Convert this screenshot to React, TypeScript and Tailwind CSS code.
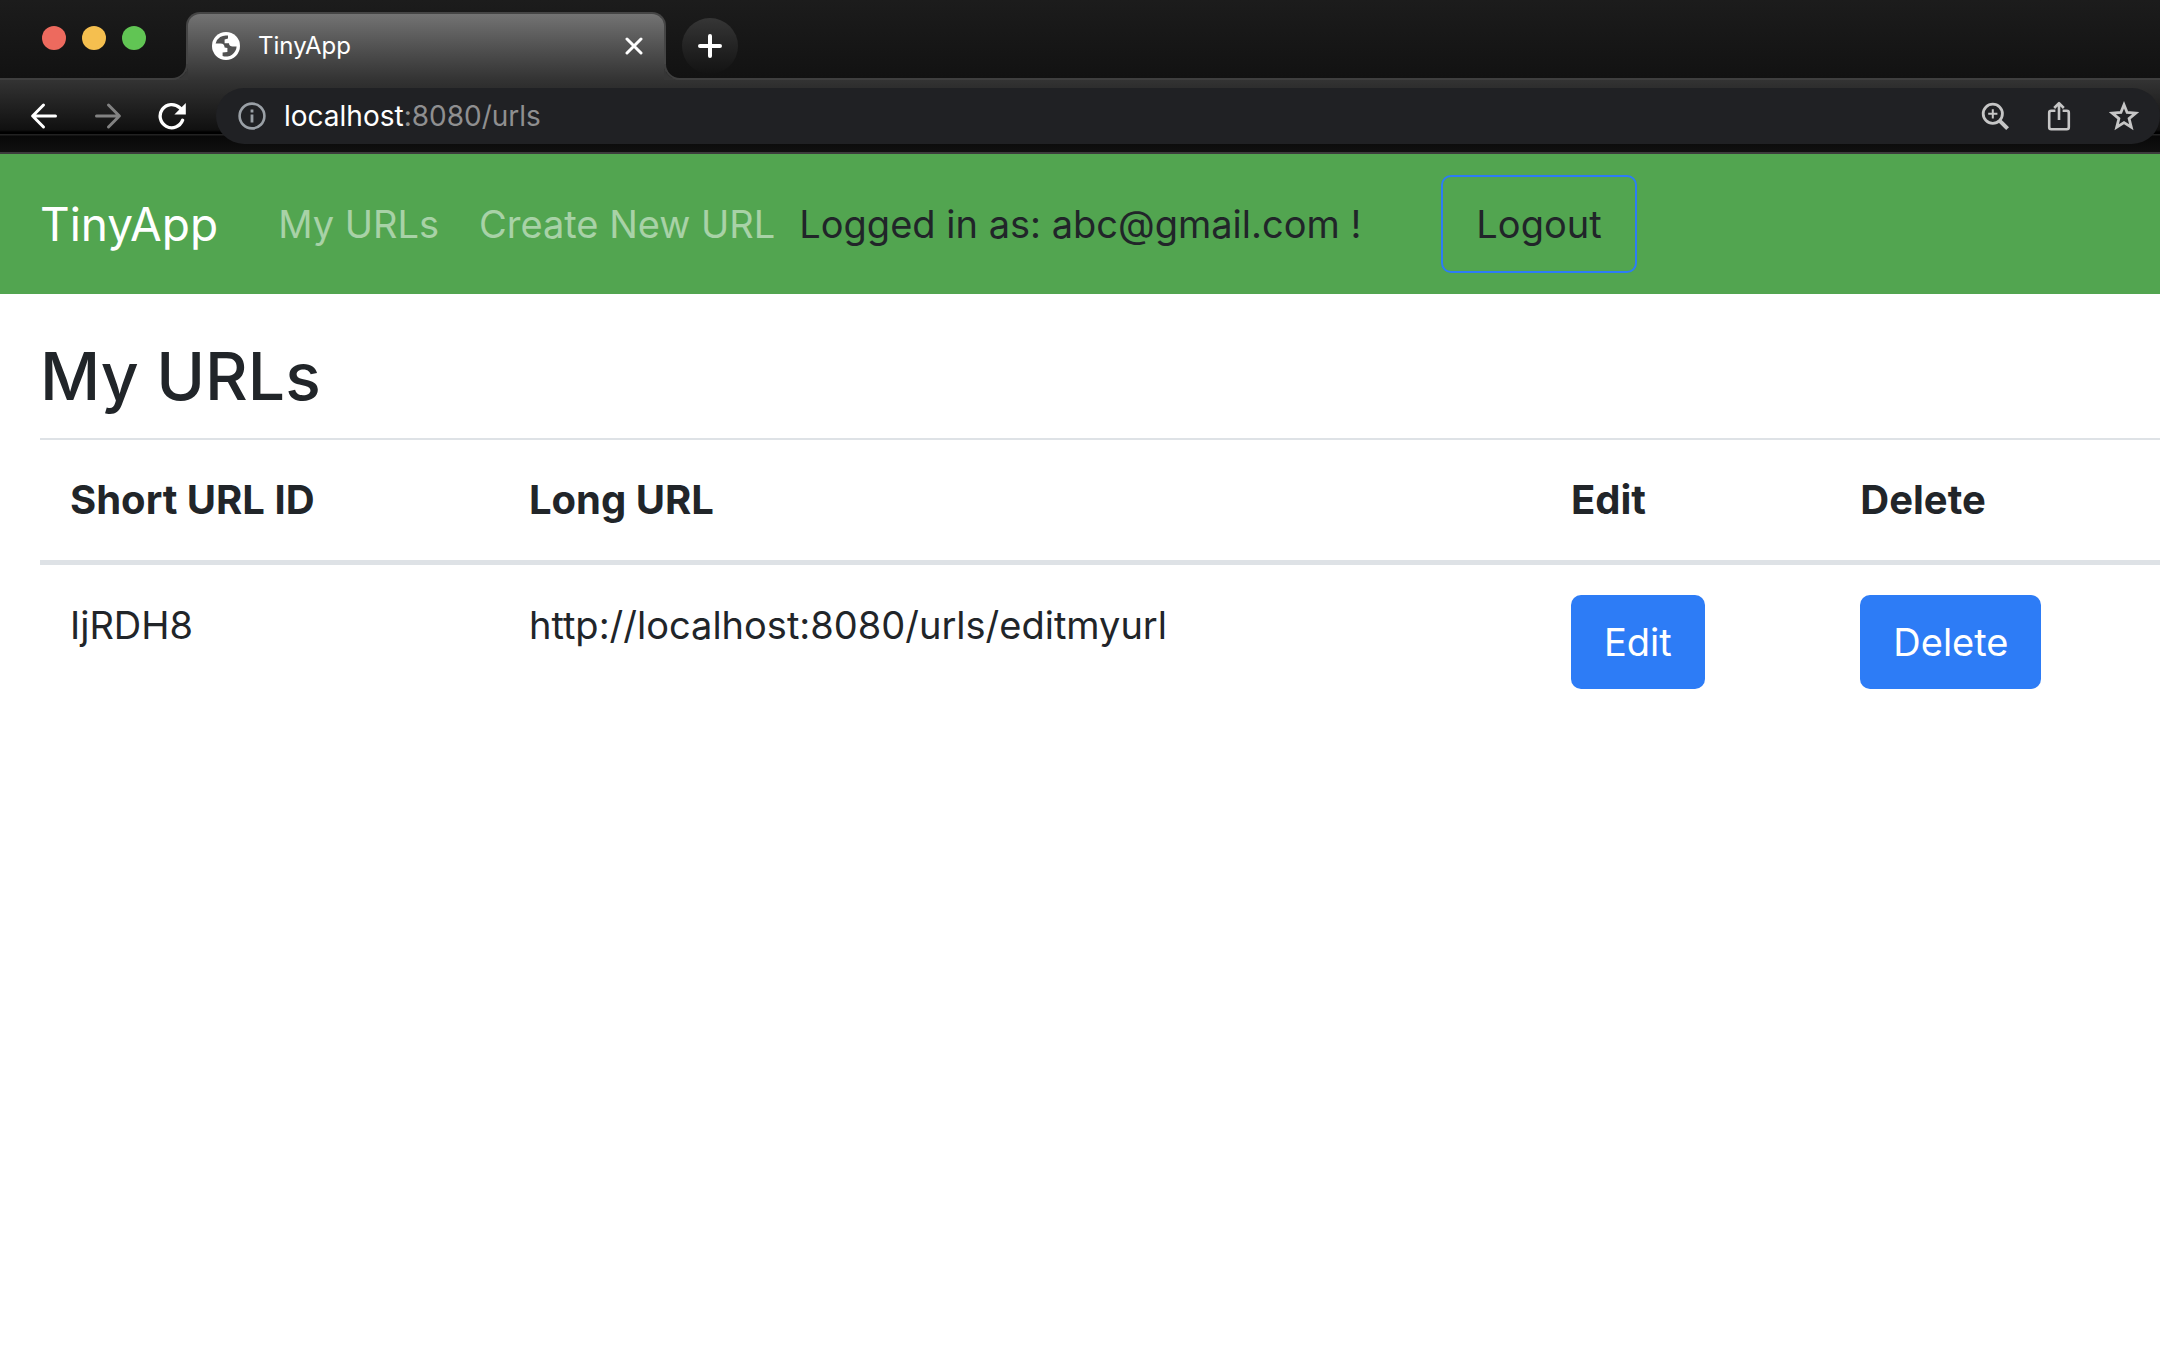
import React from "react";

const navLink = "px-5 text-[38px] leading-[60px] text-white/50";
const solidButton =
  "block rounded-[10px] bg-[#2d7cf6] px-[33px] py-[17px] text-[38px] leading-[60px] text-white";

function GlobeIcon() {
  return (
    <svg viewBox="0 0 28 28" className="size-7" aria-hidden="true">
      <circle cx="14" cy="14" r="14" fill="white" />
      <path
        d="M16 3.6 A10.6 10.6 0 0 0 3.6 11.6 L8.6 11.6 C11.4 11.6 12.4 13 12.6 15.4 L15.4 16 L15.4 20 L10.6 20.4 L10.6 24 A10.6 10.6 0 0 0 24.6 14.4 L20.6 14.4 C18.6 14.4 17 13.4 17 11.2 L12.6 11.2 L12.6 7.4 L16 6.4 Z"
        fill="#525252"
      />
    </svg>
  );
}

function BackIcon({ className }: { className: string }) {
  return (
    <svg viewBox="0 0 28 28" className={className} fill="none" stroke="currentColor" strokeWidth="3" strokeLinecap="round" strokeLinejoin="round" aria-hidden="true">
      <path d="M25.5 14H2.8M13.5 3 2.6 14l10.9 11" />
    </svg>
  );
}

function ReloadIcon() {
  return (
    <svg viewBox="0 0 28 28" className="size-7" aria-hidden="true">
      <path d="M24.600 18.200A11.600 11.600 0 1 1 21.800 5.800L24 8" fill="none" stroke="white" strokeWidth="3.300" strokeLinecap="round" />
      <path d="M27.800 1v11.400H16.400Z" fill="white" />
    </svg>
  );
}

function InfoIcon() {
  return (
    <svg viewBox="0 0 28 28" className="size-7" aria-hidden="true">
      <circle cx="14" cy="14" r="12.4" fill="none" stroke="#9aa0a6" strokeWidth="2.6" />
      <path d="M12.6 7.6h2.8v2.8h-2.8zM12.6 12.6h2.8v8h-2.8z" fill="#9aa0a6" />
    </svg>
  );
}

function ZoomIcon() {
  return (
    <svg viewBox="0 0 28 28" className="size-7" fill="none" stroke="#c6c6c6" aria-hidden="true">
      <circle cx="11.8" cy="11.8" r="9.6" strokeWidth="2.8" />
      <path d="M11.8 7.200v9.200M7.200 11.800h9.200" strokeWidth="2" />
      <path d="M18.800 18.800l7.800 7.800" strokeWidth="4" />
    </svg>
  );
}

function ShareIcon() {
  return (
    <svg viewBox="0 0 24 30" className="h-[30px] w-6" fill="none" stroke="#c6c6c6" strokeWidth="2.6" strokeLinejoin="round" aria-hidden="true">
      <path d="M8.400 9.800H4.200a2 2 0 0 0-2 2v14.400a2 2 0 0 0 2 2h15.600a2 2 0 0 0 2-2V11.800a2 2 0 0 0-2-2h-4.200" />
      <path d="M12 19V2.600M7.200 7 12 2.200l4.800 4.800" />
    </svg>
  );
}

function StarIcon() {
  return (
    <svg viewBox="0 0 30 30" className="size-[30px]" fill="none" stroke="#c6c6c6" strokeWidth="2.8" aria-hidden="true">
      <path d="M15 3.800l3.100 7.700 8.600.700-6.600 5.400 2.200 8.600L15 21.600l-7.300 4.600 2.200-8.600-6.600-5.400 8.600-.700Z" />
    </svg>
  );
}

function TabStrip() {
  return (
    <div className="flex h-20 items-end border-b-2 border-[#3f3f3f] bg-linear-to-b from-[#1c1c1c] to-[#121212]">
      <div className="flex w-[186px] shrink-0 items-center gap-4 self-start pl-[42px] pt-[26px]">
        <span className="size-6 rounded-full bg-[#ed6a5e]" />
        <span className="size-6 rounded-full bg-[#f5bf4f]" />
        <span className="size-6 rounded-full bg-[#61c554]" />
      </div>
      <div className="relative -mb-0.5 flex h-[68px] w-[480px] items-center rounded-t-[14px] border-2 border-b-0 border-[#454545] bg-linear-to-b from-[#737373] to-[#333333] pb-0.5 pl-6 pr-[21px]">
        <span className="absolute -left-[16px] bottom-0 size-4 overflow-hidden">
          <span className="absolute -left-4 -top-4 block size-8 rounded-full border-2 border-[#3f3f3f] shadow-[0_0_0_16px_#363636]" />
        </span>
        <span className="absolute -right-[16px] bottom-0 size-4 overflow-hidden">
          <span className="absolute -right-4 -top-4 block size-8 rounded-full border-2 border-[#3f3f3f] shadow-[0_0_0_16px_#363636]" />
        </span>
        <GlobeIcon />
        <span className="ml-[18px] flex-1 text-2xl text-white">TinyApp</span>
        <button aria-label="Close tab">
          <svg viewBox="0 0 18 18" className="size-[18px]" stroke="white" strokeWidth="3" strokeLinecap="round" aria-hidden="true">
            <path d="M2 2l14 14M16 2 2 16" />
          </svg>
        </button>
      </div>
      <button aria-label="New tab" className="mb-1 ml-4 flex size-14 items-center justify-center rounded-full bg-linear-to-b from-[#363636] to-[#131313]">
        <svg viewBox="0 0 24 24" className="size-6" stroke="white" strokeWidth="4" strokeLinecap="round" aria-hidden="true">
          <path d="M12 2v20M2 12h20" />
        </svg>
      </button>
    </div>
  );
}

function Toolbar() {
  return (
    <div className="flex h-[74px] items-start border-b-2 border-[#3c3c3c] bg-[linear-gradient(#333_0px,#101010_50px,#000_52px,#000_54px,#222_54px,#222_55px,#080808_56px,#101010_72px)] pt-2">
      <div className="flex h-14 w-[216px] shrink-0 items-center gap-9 pl-[30px]">
        <button aria-label="Back" className="text-white">
          <BackIcon className="size-7" />
        </button>
        <button aria-label="Forward" className="text-[#828282]">
          <BackIcon className="size-7 rotate-180" />
        </button>
        <button aria-label="Reload">
          <ReloadIcon />
        </button>
      </div>
      <div className="flex h-14 flex-1 items-center rounded-full bg-[#202124] pl-[22px] pr-[21px]">
        <InfoIcon />
        <div className="ml-[18px] flex-1 text-[28px] text-[#8f8f90]">
          <span className="text-white">localhost</span>:8080/urls
        </div>
        <div className="flex items-center gap-[38px]">
          <button aria-label="Zoom"><ZoomIcon /></button>
          <button aria-label="Share"><ShareIcon /></button>
          <button aria-label="Bookmark this page"><StarIcon /></button>
        </div>
      </div>
    </div>
  );
}

export default function App() {
  return (
    <div className="min-h-screen bg-white font-['Inter',sans-serif] text-[#212529]">
      <TabStrip />
      <Toolbar />
      <nav className="flex items-center bg-[#52a550] px-10 py-[21px]">
        <a href="#home" className="mr-10 text-[46px] leading-[75px] text-white">TinyApp</a>
        <div className="mr-1 flex">
          <a href="#urls" className={navLink}>My URLs</a>
          <a href="#new" className={navLink}>Create New URL</a>
        </div>
        <span className="text-[38px] leading-[60px]">Logged in as: abc@gmail.com !</span>
        <button className="ml-20 rounded-[10px] border-2 border-[#2d7cf6] px-[33px] py-[17px] text-[38px] leading-[60px]">
          Logout
        </button>
      </nav>
      <main className="pl-10 pt-10">
        <h1 className="mb-5 text-[66px] font-medium leading-[84px]">My URLs</h1>
        <table className="w-full table-fixed text-left text-[38px] leading-[60px]">
          <colgroup>
            <col className="w-[21.65%]" />
            <col className="w-[49.15%]" />
            <col className="w-[13.65%]" />
            <col />
          </colgroup>
          <thead className="text-[40px]">
            <tr className="border-b-[5px] border-t-2 border-[#dee2e6]">
              {["Short URL ID", "Long URL", "Edit", "Delete"].map((h) => (
                <th key={h} className="p-[30px] font-bold">{h}</th>
              ))}
            </tr>
          </thead>
          <tbody>
            <tr className="align-top">
              <td className="p-[30px]">IjRDH8</td>
              <td className="p-[30px]">http://localhost:8080/urls/editmyurl</td>
              <td className="p-[30px]"><button className={solidButton}>Edit</button></td>
              <td className="p-[30px]"><button className={solidButton}>Delete</button></td>
            </tr>
          </tbody>
        </table>
      </main>
    </div>
  );
}
